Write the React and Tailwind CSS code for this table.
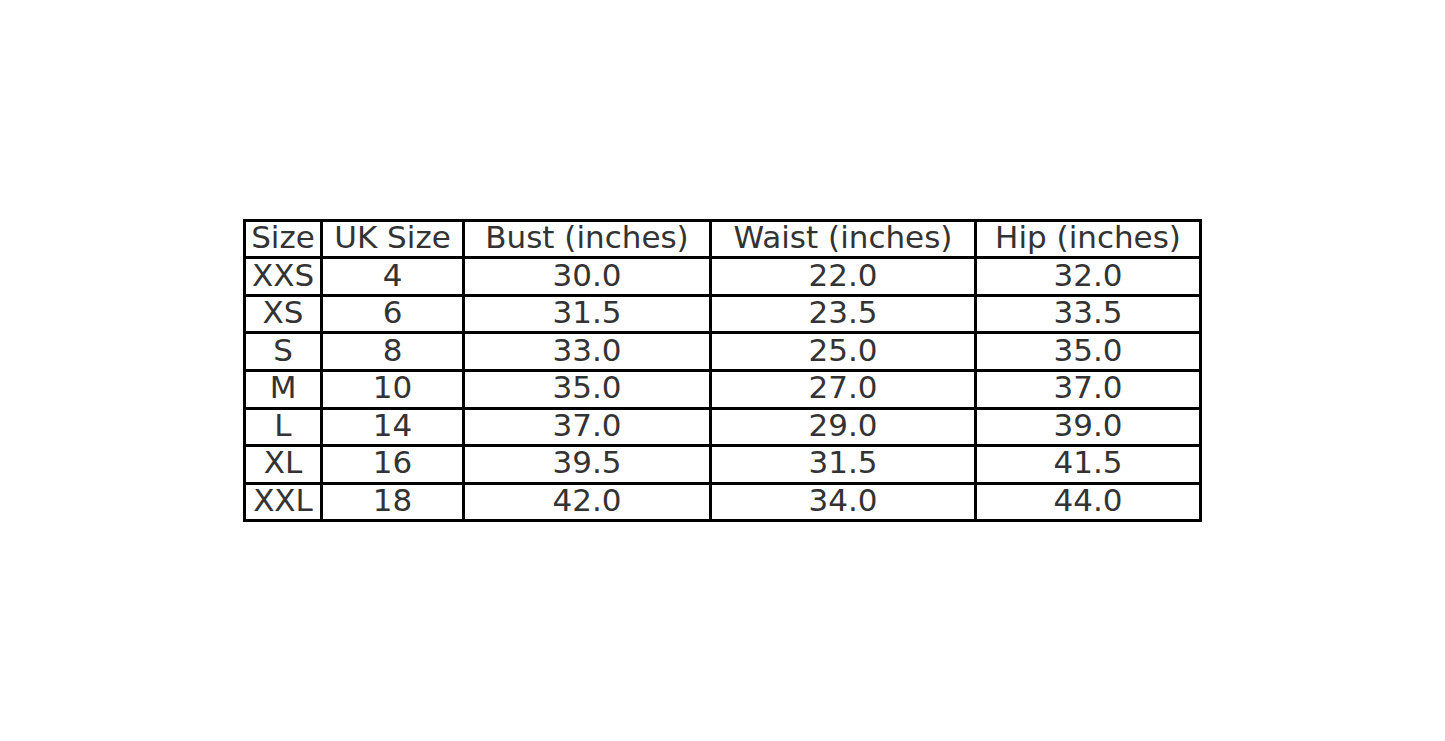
const headers = ["Size", "UK Size", "Bust (inches)", "Waist (inches)", "Hip (inches)"];

const rows = [
  ["XXS", "4", "30.0", "22.0", "32.0"],
  ["XS", "6", "31.5", "23.5", "33.5"],
  ["S", "8", "33.0", "25.0", "35.0"],
  ["M", "10", "35.0", "27.0", "37.0"],
  ["L", "14", "37.0", "29.0", "39.0"],
  ["XL", "16", "39.5", "31.5", "41.5"],
  ["XXL", "18", "42.0", "34.0", "44.0"],
];

export default function App() {
  return (
    <div className="min-h-screen w-full bg-white flex items-center justify-center font-['DejaVu_Sans',sans-serif]">
      <div className="grid grid-cols-[74px_139px_244px_262px_222px] grid-rows-[repeat(8,34.6px)] gap-[3px] p-[3px] bg-black">
        {headers.map((h) => (
          <div key={h} className="bg-white flex items-center justify-center pb-[3px] text-[31px] leading-none text-[#333] whitespace-nowrap">
            {h}
          </div>
        ))}
        {rows.map((r) =>
          r.map((c, i) => (
            <div key={r[0] + i} className="bg-white flex items-center justify-center pb-[3px] text-[31px] leading-none text-[#333]">
              {c}
            </div>
          ))
        )}
      </div>
    </div>
  );
}
